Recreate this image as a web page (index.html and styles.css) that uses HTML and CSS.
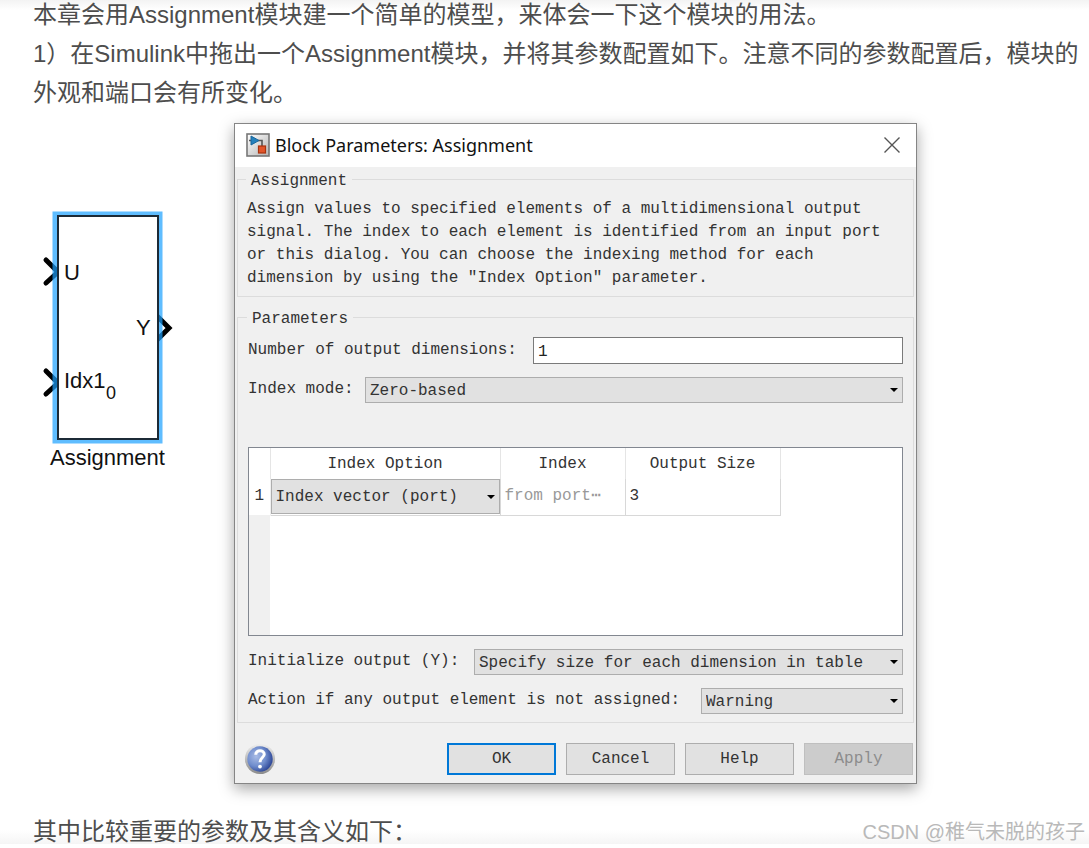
FILE: index.html
```html
<!DOCTYPE html>
<html lang="zh-CN">
<head>
<meta charset="utf-8">
<meta name="viewport" content="width=device-width, initial-scale=1">
<title>Assignment模块</title>
<link rel="stylesheet" href="styles.css">
</head>
<body>
<main class="article">
  <p class="text">本章会用Assignment模块建一个简单的模型，来体会一下这个模块的用法。<br>1）在Simulink中拖出一个Assignment模块，并将其参数配置如下。注意不同的参数配置后，模块的外观和端口会有所变化。</p>

  <section class="figure">
    <svg class="block" width="144" height="270" viewBox="0 0 144 270" role="img" aria-label="Assignment block">
      <g fill="none" stroke="#000" stroke-width="5" stroke-linecap="round">
        <path d="M13 52 L25 64 L13 75"/>
        <path d="M13 163 L25 175 L13 186"/>
        <path d="M124 108 L136 120 L124 132"/>
      </g>
      <rect x="22" y="6" width="105" height="227" fill="none" stroke="#1ba1ff" stroke-opacity=".7" stroke-width="5"/>
      <rect x="25" y="8" width="100" height="223" fill="#fff" stroke="#1c2a36" stroke-width="2"/>
      <g fill="#111" font-family="Liberation Sans, Arial, sans-serif" font-size="22">
        <text x="31" y="72">U</text>
        <text x="103" y="127">Y</text>
        <text x="31" y="180">Idx1</text>
        <text x="73" y="191" font-size="18">0</text>
        <text x="17" y="257">Assignment</text>
      </g>
    </svg>

    <form class="dialog">
      <header class="titlebar">
        <svg class="appicon" width="24" height="24" viewBox="0 0 24 24" aria-hidden="true">
          <defs><linearGradient id="tile" x1="0" y1="0" x2="1" y2="1"><stop offset="0" stop-color="#fff"/><stop offset="1" stop-color="#b4b4b4"/></linearGradient></defs>
          <rect x="1" y="1" width="22" height="22" fill="url(#tile)" stroke="#777" stroke-width="1.6"/>
          <path d="M3 7.500H5M12 7.500H16V13" fill="none" stroke="#555" stroke-width="1.600"/>
          <path d="M5 3L13 7.500L5 12Z" fill="#2581bd" stroke="#1a669b" stroke-width="1"/>
          <rect x="12.500" y="13" width="7" height="7" fill="#e2552a" stroke="#a9330f" stroke-width="1.200"/>
        </svg>
        <h1 class="title">Block Parameters: Assignment</h1>
        <button class="close" type="button" aria-label="Close"><svg width="16" height="16" viewBox="0 0 16 16"><path d="M.5.500L15.500 15.500M15.500.500L.5 15.500" stroke="#555" stroke-width="1.400" fill="none"/></svg></button>
      </header>

      <fieldset class="group">
        <legend>Assignment</legend>
        <p class="about">Assign values to specified elements of a multidimensional output<br>signal. The index to each element is identified from an input port<br>or this dialog. You can choose the indexing method for each<br>dimension by using the "Index Option" parameter.</p>
      </fieldset>

      <fieldset class="group params">
        <legend>Parameters</legend>
        <div class="row"><label class="label-dims" for="dims">Number of output dimensions:</label><input class="field" id="dims" type="text" value="1"></div>
        <div class="row"><label class="label-mode" for="mode">Index mode:</label><span class="combo"><select id="mode"><option>Zero-based</option></select></span></div>
        <div class="grid">
          <table>
            <thead><tr><th class="num"></th><th class="option">Index Option</th><th class="index">Index</th><th class="size">Output Size</th></tr></thead>
            <tbody><tr><td class="num">1</td><td class="cell-combo"><span class="combo"><select aria-label="Index Option"><option>Index vector (port)</option></select></span></td><td class="muted">from port⋯</td><td>3</td></tr></tbody>
          </table>
        </div>
        <div class="row"><label class="label-init" for="init">Initialize output (Y):</label><span class="combo"><select id="init"><option>Specify size for each dimension in table</option></select></span></div>
        <div class="row"><label class="label-action" for="action">Action if any output element is not assigned:</label><span class="combo"><select id="action"><option>Warning</option></select></span></div>
      </fieldset>

      <footer class="actions">
        <button class="round" type="button" aria-label="Help topics">
          <svg width="32" height="32" viewBox="0 0 34 34">
            <defs>
              <linearGradient id="rim" x1="0" y1="0" x2="0" y2="1"><stop offset="0" stop-color="#eee"/><stop offset="1" stop-color="#8b8b8b"/></linearGradient>
              <radialGradient id="ball" cx=".35" cy=".4" r=".7"><stop offset="0" stop-color="#a9bce6"/><stop offset=".55" stop-color="#6f8ccc"/><stop offset="1" stop-color="#263f91"/></radialGradient>
            </defs>
            <circle cx="17" cy="17" r="16" fill="url(#rim)"/>
            <circle cx="17" cy="17" r="13.500" fill="url(#ball)"/>
            <path d="M12.500 12.500C12.500 6.500 21.500 7 21.500 12C21.500 15.500 17 15.500 17 20.500" fill="none" stroke="#fff" stroke-width="3.200"/>
            <circle cx="17" cy="25" r="2" fill="#fff"/>
          </svg>
        </button>
        <button class="btn primary" type="button">OK</button>
        <button class="btn" type="button">Cancel</button>
        <button class="btn" type="button">Help</button>
        <button class="btn" type="button" disabled>Apply</button>
      </footer>
    </form>
  </section>

  <p class="text last">其中比较重要的参数及其含义如下：</p>
  <span class="watermark">CSDN @稚气未脱的孩子</span>
</main>
</body>
</html>
```
FILE: styles.css
```css
* { box-sizing: border-box; }
body { margin: 0; background: #fff; }

.article {
  position: relative;
  display: flow-root;
  overflow: hidden;
  padding: 0 8px 0 33px;
  background:
    linear-gradient(#f3f3f3, #fff) top / 100% 10px no-repeat,
    linear-gradient(#fff, #f5f5f5) bottom / 100% 14px no-repeat;
}
.text {
  margin: -5px 0 0;
  color: #4d4d4d;
  font: 24px/39px "Liberation Sans", "Noto Sans CJK SC", sans-serif;
}
.text.last { margin: 0; padding-top: 28px; margin-bottom: -7px; }

.figure { display: flex; padding: 11px 164px 0 0; }
.block { flex: none; margin: 85px 57px 0 0; }

.dialog {
  flex: 1;
  min-width: 0;
  border: 1px solid #858585;
  background: #f0f0f0;
  box-shadow: 0 5px 14px rgba(0, 0, 0, .35);
  color: #333;
  font: 16px/23px "Liberation Mono", monospace;
}
.titlebar {
  display: flex;
  align-items: center;
  gap: 5px;
  height: 43px;
  padding: 0 16px 2px 11px;
  background: #fff;
}
.title {
  flex: 1;
  margin: 0;
  color: #111;
  font: 18px/24px "Noto Sans", sans-serif;
}
.close, .round {
  display: flex;
  padding: 0;
  border: 0;
  background: none;
}

.group {
  min-width: 0;
  margin: 0 2px;
  padding: 7px 9px 6px;
  border: 1px solid #dcdcdc;
}
.group legend { margin-left: -1px; padding: 3px 5px 0; height: 24px; }
.group.params { margin-top: 8px; padding: 8px 10px; }
.about { margin: 0; white-space: nowrap; }

.row { display: flex; align-items: center; height: 27px; margin-bottom: 12px; }
.row:last-child { margin-bottom: 0; }
.row label { flex: none; white-space: nowrap; }
.label-dims { width: 285px; }
.label-mode { width: 117px; }
.label-init { width: 226px; }
.label-action { width: 453px; }

.field {
  flex: 1;
  min-width: 0;
  height: 27px;
  padding: 2px 4px 0;
  border: 1px solid #7a7a7a;
  border-radius: 0;
  background: #fff;
  color: #222;
  font: inherit;
}
.combo { position: relative; display: flex; flex: 1; min-width: 0; height: 26px; }
.combo::after {
  content: "";
  position: absolute;
  top: 50%;
  right: 5px;
  margin-top: -2px;
  border: 4px solid transparent;
  border-top-color: #000;
  border-bottom: 0;
  pointer-events: none;
}
.combo select {
  appearance: none;
  width: 100%;
  padding: 2px 16px 0 4px;
  border: 1px solid #adadad;
  border-radius: 0;
  background: #e1e1e1;
  color: #333;
  font: inherit;
}

.grid {
  height: 189px;
  margin: 44px 0 12px;
  border: 1px solid #828790;
  background: linear-gradient(#f0f0f0, #f0f0f0) left / 21px 100% no-repeat #fff;
}
table { border-collapse: collapse; table-layout: fixed; width: 531px; background: #fff; }
th { height: 31px; padding: 2px 0 0; border-right: 1px solid #e5e5e5; font-weight: 400; }
td { height: 36px; padding: 0 4px; border: 1px solid #d8d8d8; border-top: 0; white-space: nowrap; }
.num { width: 21px; padding: 0; border-left: 0; text-align: center; }
td.num { border-color: #f0f0f0; }
.option { width: 230px; }
.index { width: 125px; }
.size { width: 155px; }
.muted { color: #999; }
.cell-combo { padding: 0; }
.cell-combo .combo { height: 35px; }

.actions {
  display: flex;
  align-items: center;
  justify-content: flex-end;
  gap: 10px;
  padding: 20px 3px 8px 9px;
}
.round { margin-right: auto; }
.btn {
  width: 109px;
  height: 32px;
  padding: 0;
  border: 1px solid #adadad;
  border-radius: 0;
  background: #e1e1e1;
  color: #333;
  font: inherit;
}
.btn.primary { border: 2px solid #0078d7; }
.btn:disabled { border-color: #bfbfbf; background: #ccc; color: #8c8c8c; }

.watermark {
  position: absolute;
  right: 4px;
  bottom: 0;
  color: #b9b9b9;
  font: 20px/24px "Liberation Sans", "Noto Sans CJK SC", sans-serif;
}
```
